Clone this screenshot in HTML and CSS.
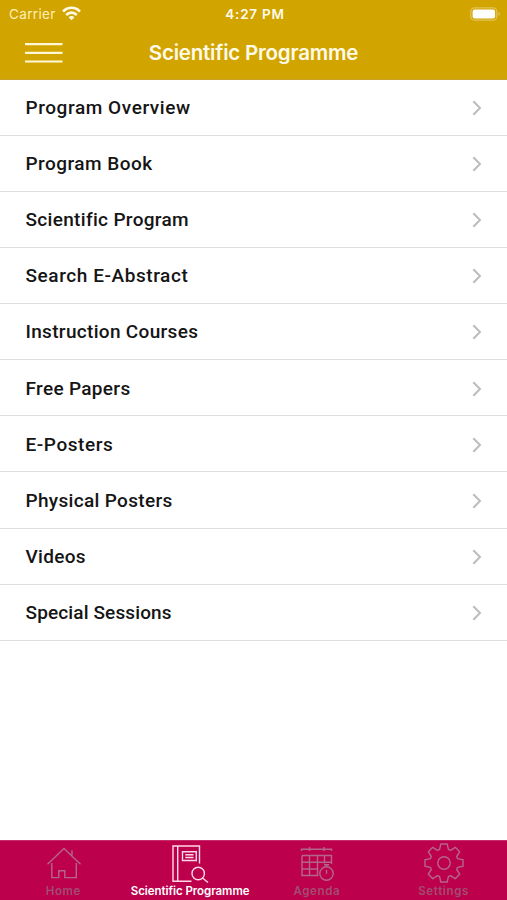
FILE: index.html
```html
<!DOCTYPE html>
<html lang="en">
<head>
<meta charset="utf-8">
<title>Scientific Programme</title>
<link rel="stylesheet" href="styles.css">
</head>
<body>
<div class="app">
  <header class="header">
    <div class="status">
      <div class="carrier"><span>Carrier</span>
        <svg width="19" height="15" viewBox="0 0 18 14" fill="none" stroke="#fffbe8" stroke-width="2.5"><path d="M1 5.2C5.5.4 12.5.4 17 5.2"/><path d="M4 8.4c2.9-2.9 7.1-2.9 10 0"/><path d="M6.2 10.5c1.6-1.5 4-1.5 5.6 0L9 13.5z" fill="#fffbe8" stroke="none"/></svg>
      </div>
      <div class="time">4:27 PM</div>
      <svg class="battery" width="31" height="14" viewBox="0 0 31 14"><rect x=".8" y=".8" width="26" height="12.4" rx="3.8" fill="none" stroke="#e2c25a" stroke-width="1.3"/><rect x="2.600" y="2.500" width="22.500" height="9" rx="2.2" fill="#fff"/><path d="M28.5 5c2 .8 2 3.2 0 4z" fill="#e2c25a"/></svg>
    </div>
    <div class="nav">
      <svg class="menu" width="38" height="22" viewBox="0 0 38 22" stroke="#fff8d8" stroke-width="2.2"><path d="M0 2.2h37.5M0 10.9h37.5M0 19.5h37.5"/></svg>
      <h1 class="title">Scientific Programme</h1>
    </div>
  </header>
  <main class="list">
    <div class="row"><span>Program Overview</span><svg class="chevron" viewBox="0 0 10 16"><path d="M1.3 1.2 8 8l-6.700 6.800"/></svg></div>
    <div class="row"><span class="snug">Program Book</span><svg class="chevron" viewBox="0 0 10 16"><path d="M1.3 1.2 8 8l-6.700 6.800"/></svg></div>
    <div class="row"><span class="tight">Scientific Program</span><svg class="chevron" viewBox="0 0 10 16"><path d="M1.3 1.2 8 8l-6.700 6.800"/></svg></div>
    <div class="row"><span>Search E-Abstract</span><svg class="chevron" viewBox="0 0 10 16"><path d="M1.3 1.2 8 8l-6.700 6.800"/></svg></div>
    <div class="row"><span class="tight">Instruction Courses</span><svg class="chevron" viewBox="0 0 10 16"><path d="M1.3 1.2 8 8l-6.700 6.800"/></svg></div>
    <div class="row"><span class="tight">Free Papers</span><svg class="chevron" viewBox="0 0 10 16"><path d="M1.3 1.2 8 8l-6.700 6.800"/></svg></div>
    <div class="row"><span>E-Posters</span><svg class="chevron" viewBox="0 0 10 16"><path d="M1.3 1.2 8 8l-6.700 6.800"/></svg></div>
    <div class="row"><span class="tight">Physical Posters</span><svg class="chevron" viewBox="0 0 10 16"><path d="M1.3 1.2 8 8l-6.700 6.800"/></svg></div>
    <div class="row"><span class="tight">Videos</span><svg class="chevron" viewBox="0 0 10 16"><path d="M1.3 1.2 8 8l-6.700 6.800"/></svg></div>
    <div class="row"><span class="tighter">Special Sessions</span><svg class="chevron" viewBox="0 0 10 16"><path d="M1.3 1.2 8 8l-6.700 6.800"/></svg></div>
  </main>
  <nav class="tabs">
    <div class="tab"><svg class="icon" viewBox="0 0 40 40"><path d="M3.500 20.300 20 4.500l16.500 15.800M7.800 19v14.600h7v-6.800h6v6.800h11.500V19M28 11.500V6.300"/></svg><span>Home</span></div>
    <div class="tab active"><svg class="icon" viewBox="0 0 40 40"><path d="M28.500 19.500V2H2v35.300h18.500M6.700 2v35.300M11.500 7.700h13.800v8.800H11.500zM14.300 10.700h8.200M14.300 13.500h8.200"/><circle cx="27.200" cy="29.500" r="6.200"/><path d="m31.500 34 5.500 4.500"/></svg><span>Scientific Programme</span></div>
    <div class="tab"><svg class="icon" viewBox="0 0 40 40"><path d="M3.500 7V5.200h30V7M11.500 3v4M26 3v4M4 11.500h29.500v8.500M4 11.500v20h16.500M4 18.200h29.500M4 25h16.500M11.500 11.500v20M19.500 11.500v20M26.500 11.500v8"/><circle cx="28.500" cy="29.500" r="6.700"/><path d="M28.500 25.700v4M26 20.800h5M28.500 20.800v2"/></svg><span>Agenda</span></div>
    <div class="tab"><svg class="icon gear" viewBox="-20 -20 40 40"><path stroke-linejoin="round" d="M-3.200-19H3.200L4.400-13.600 6.500-12.700 11.200-15.700 15.700-11.200 12.700-6.500 13.600-4.400 19-3.200V3.200L13.600 4.400 12.700 6.500 15.700 11.200 11.200 15.700 6.500 12.700 4.400 13.600 3.200 19H-3.200L-4.400 13.600-6.500 12.700-11.200 15.700-15.700 11.200-12.700 6.500-13.600 4.400-19 3.200V-3.200L-13.600-4.400-12.700-6.500-15.700-11.200-11.200-15.700-6.500-12.700-4.400-13.600Z"/><circle r="6.200"/></svg><span>Settings</span></div>
  </nav>
</div>
</body>
</html>
```
FILE: styles.css
```css
* { box-sizing: border-box; }
body { margin: 0; background: #fff; font-family: Inter, "Liberation Sans", sans-serif; }
.app { height: 900px; display: flex; flex-direction: column; overflow: hidden; }
.header { height: 79.500px; flex: none; background: #d2a400; color: #fffbe8; border-bottom: 1px solid #c9a12a; }
.status { height: 27px; display: grid; grid-template-columns: 1fr auto 1fr; align-items: center; padding: 0 6px 0 9px; font-size: 13.500px; }
.carrier { display: flex; align-items: center; gap: 6px; color: #fff0b5; letter-spacing: .35px; }
.time { font-weight: 600; letter-spacing: .75px; }
.battery { justify-self: end; }
.nav { height: 51px; display: grid; grid-template-columns: 70px 1fr 70px; align-items: center; }
.menu { margin-left: 25px; }
.title { margin: 0; font-size: 20.500px; font-weight: 600; line-height: 28px; text-align: center; letter-spacing: -.2px; white-space: nowrap; }
.list { flex: 1; }
.row { height: 56.15px; display: flex; align-items: center; justify-content: space-between; padding: 1.500px 24px 0 25.500px; border-bottom: 1px solid #dedede; color: #151515; font: 500 19px/24px Roboto, sans-serif; letter-spacing: .57px; }
.snug { letter-spacing: .46px; }
.tight { letter-spacing: .32px; }
.tighter { letter-spacing: .13px; }
.chevron { width: 10px; height: 16px; margin-right: 1px; fill: none; stroke: #bdbdbd; stroke-width: 2; }
.tabs { height: 60px; flex: none; display: grid; grid-template-columns: repeat(4, 1fr); background: #bd004c; border-top: 1px solid #c62a68; }
.tab { display: flex; flex-direction: column; align-items: center; padding-top: 3px; color: #a34c72; font-size: 11.500px; font-weight: 600; line-height: 14px; letter-spacing: .65px; white-space: nowrap; }
.icon { width: 40px; height: 40px; flex: none; margin-left: 2px; fill: none; stroke: #b4658a; stroke-width: 1.400; }
.gear { margin: -1px 0 1px; }
.active { color: #fff; letter-spacing: -.05px; }
.active .icon { stroke: #ffd9e8; }
```
